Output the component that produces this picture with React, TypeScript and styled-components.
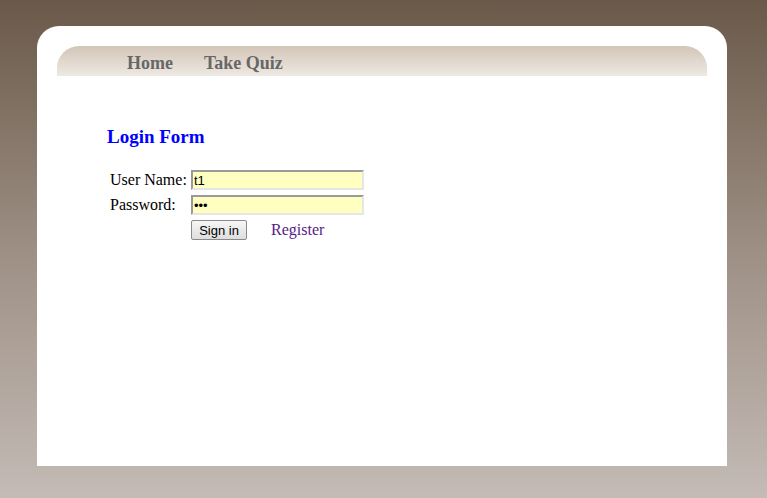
import styled, { createGlobalStyle } from "styled-components";

const GlobalStyle = createGlobalStyle`
  html, body {
    margin: 0;
    padding: 0;
    height: 100%;
  }
  body {
    background: linear-gradient(to bottom, #6a5949 0%, #9d8f84 50%, #c4bbb6 100%);
    font-family: "Liberation Serif", "Times New Roman", serif;
    font-size: 16px;
    color: #000;
  }
`;

const Page = styled.div`
  padding: 26px 40px 0 37px;
  height: 498px;
  box-sizing: border-box;
`;

const Card = styled.div`
  width: 690px;
  height: 440px;
  background: #fff;
  border-radius: 22px 22px 0 0;
  padding: 20px 20px 0;
  box-sizing: border-box;
`;

const NavBar = styled.nav`
  height: 30px;
  border-radius: 22px 22px 0 0;
  background: linear-gradient(to bottom, #d3c5b7 0%, #eee9e4 100%);
  display: flex;
  align-items: center;
  gap: 31px;
  padding-left: 70px;
  padding-top: 5px;
  box-sizing: border-box;
`;

const NavLink = styled.a`
  font-weight: bold;
  font-size: 18px;
  color: #676767;
  text-decoration: none;
`;

const Content = styled.div`
  padding: 50px 0 0 50px;
`;

const Heading = styled.h3`
  margin: 0 0 22px;
  font-size: 19px;
  font-weight: bold;
  color: #0000ff;
`;

const FormGrid = styled.div`
  display: grid;
  grid-template-columns: 81px auto;
  row-gap: 5px;
  align-items: center;
  padding-left: 3px;
`;

const Label = styled.label`
  font-size: 16px;
  line-height: 20px;
`;

const Field = styled.input`
  width: 173px;
  height: 20px;
  box-sizing: border-box;
  background: #ffffc0;
  border: 2px solid;
  border-color: #9a9a9a #e6e6e6 #e6e6e6 #9a9a9a;
  padding: 0 1px;
  font-family: "Liberation Sans", Arial, sans-serif;
  font-size: 13px;
  color: #000;
  outline: none;
`;

const Actions = styled.div`
  grid-column: 2;
  display: flex;
  align-items: center;
  gap: 24px;
  height: 20px;
`;

const Button = styled.button`
  width: 56px;
  height: 20px;
  padding: 0;
  font-family: "Liberation Sans", Arial, sans-serif;
  font-size: 13px;
  color: #000;
  background: linear-gradient(to bottom, #f6f6f6, #dedede);
  border: 1px solid #8a8a8a;
  border-radius: 2px;
`;

const RegisterLink = styled.a`
  font-size: 16px;
  color: #551a8b;
  text-decoration: none;
`;

export default function App() {
  return (
    <>
      <GlobalStyle />
      <Page>
        <Card>
          <NavBar>
            <NavLink href="#">Home</NavLink>
            <NavLink href="#">Take Quiz</NavLink>
          </NavBar>
          <Content>
            <Heading>Login Form</Heading>
            <FormGrid>
              <Label htmlFor="user">User Name:</Label>
              <Field id="user" type="text" defaultValue="t1" />
              <Label htmlFor="pass">Password:</Label>
              <Field id="pass" type="password" defaultValue="abc" />
              <Actions>
                <Button type="button">Sign in</Button>
                <RegisterLink href="#">Register</RegisterLink>
              </Actions>
            </FormGrid>
          </Content>
        </Card>
      </Page>
    </>
  );
}
